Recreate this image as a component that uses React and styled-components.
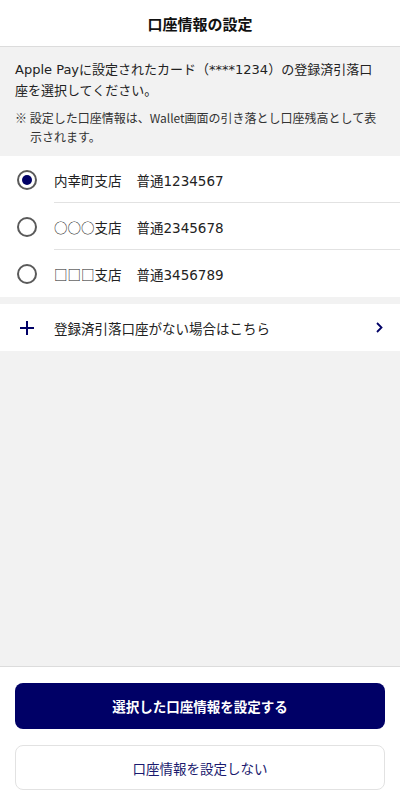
import React, { useState } from 'react'
import styled, { createGlobalStyle } from 'styled-components'

const GlobalStyle = createGlobalStyle`
    html, body {
        margin: 0;
        padding: 0;
    }
    body {
        font-family: "Noto Sans CJK JP", "Noto Sans", sans-serif;
        color: #222;
        background: #f2f2f2;
    }
    * {
        box-sizing: border-box;
    }
`

const accounts = [
    { branch: '内幸町支店', number: '普通1234567' },
    { branch: '○○○支店', number: '普通2345678' },
    { branch: '□□□支店', number: '普通3456789' },
]

const App = () => {
    const [selected, setSelected] = useState(0)
    return (
        <Page>
            <GlobalStyle />
            <Header>口座情報の設定</Header>
            <Intro>
                <Lead>Apple Payに設定されたカード（****1234）の登録済引落口座を選択してください。</Lead>
                <Note>※ 設定した口座情報は、Wallet画面の引き落とし口座残高として表示されます。</Note>
            </Intro>
            <List>
                {accounts.map((a, i) => (
                    <Row key={i} onClick={() => setSelected(i)}>
                        <Radio $checked={selected === i} />
                        <RowBody $last={i === accounts.length - 1}>
                            <span>{a.branch}</span>
                            <AccountNo>{a.number}</AccountNo>
                        </RowBody>
                    </Row>
                ))}
            </List>
            <AddRow>
                <svg width="14" height="14" viewBox="0 0 14 14">
                    <path d="M7 0v14M0 7h14" stroke="#000066" strokeWidth="2" fill="none" />
                </svg>
                <AddText>登録済引落口座がない場合はこちら</AddText>
                <svg width="7" height="11" viewBox="0 0 7 11">
                    <path d="M1 1l4.5 4.5L1 10" stroke="#000066" strokeWidth="1.8" fill="none" />
                </svg>
            </AddRow>
            <Spacer />
            <Footer>
                <PrimaryButton>選択した口座情報を設定する</PrimaryButton>
                <SecondaryButton>口座情報を設定しない</SecondaryButton>
            </Footer>
        </Page>
    )
}

export default App

const Page = styled.div`
    display: flex;
    flex-direction: column;
    min-height: 100vh;
    background: #f2f2f2;
`

const Header = styled.div`
    height: 47px;
    display: flex;
    align-items: center;
    justify-content: center;
    background: #fff;
    border-bottom: 1px solid #dcdcdc;
    font-size: 15px;
    font-weight: 700;
    color: #111;
    padding-top: 1px;
`

const Intro = styled.div`
    padding: 13px 17px 10px 15px;
    background: #f2f2f2;
`

const Lead = styled.p`
    margin: 0;
    font-family: "DejaVu Sans", "Noto Sans CJK JP", sans-serif;
    font-size: 13px;
    line-height: 20.5px;
    color: #222;
`

const Note = styled.p`
    margin: 7px 0 0;
    padding-left: 15px;
    text-indent: -15px;
    font-size: 12px;
    line-height: 19px;
    color: #333;
`

const List = styled.div`
    background: #fff;
    margin-bottom: 7px;
`

const Row = styled.div`
    display: flex;
    align-items: center;
    padding-left: 17px;
    gap: 17px;
    height: 47px;
    cursor: pointer;
`

const Radio = styled.span`
    width: 20px;
    height: 20px;
    flex-shrink: 0;
    border-radius: 50%;
    border: 2px solid #5a5a5a;
    display: flex;
    align-items: center;
    justify-content: center;
    &::after {
        content: '';
        width: 10px;
        height: 10px;
        border-radius: 50%;
        background: #000066;
        display: ${p => (p.$checked ? 'block' : 'none')};
    }
`

const RowBody = styled.div`
    flex: 1;
    height: 100%;
    display: flex;
    align-items: center;
    gap: 15px;
    font-size: 13.5px;
    color: #222;
    border-bottom: ${p => (p.$last ? 'none' : '1px solid #e2e2e2')};
    padding-top: ${p => (p.$last ? '0' : '1px')};
`

const AccountNo = styled.span`
    font-family: "DejaVu Sans", "Noto Sans CJK JP", sans-serif;
`

const AddRow = styled.div`
    display: flex;
    align-items: center;
    height: 47px;
    background: #fff;
    padding: 0 17px 0 20px;
    svg {
        flex-shrink: 0;
    }
`

const AddText = styled.span`
    flex: 1;
    margin-left: 20px;
    font-size: 13.5px;
    color: #222;
`

const Spacer = styled.div`
    flex: 1;
`

const Footer = styled.div`
    background: #fff;
    border-top: 1px solid #dcdcdc;
    padding: 16px 15px 15px;
    display: flex;
    flex-direction: column;
    gap: 16px;
`

const PrimaryButton = styled.button`
    height: 46px;
    border: none;
    border-radius: 8px;
    background: #000066;
    color: #fff;
    font-family: inherit;
    font-size: 13.5px;
    font-weight: 700;
    cursor: pointer;
`

const SecondaryButton = styled.button`
    height: 45px;
    border: 1px solid #e2e2e2;
    border-radius: 8px;
    background: #fff;
    color: #1a1a6e;
    font-family: inherit;
    font-size: 13.5px;
    cursor: pointer;
`
